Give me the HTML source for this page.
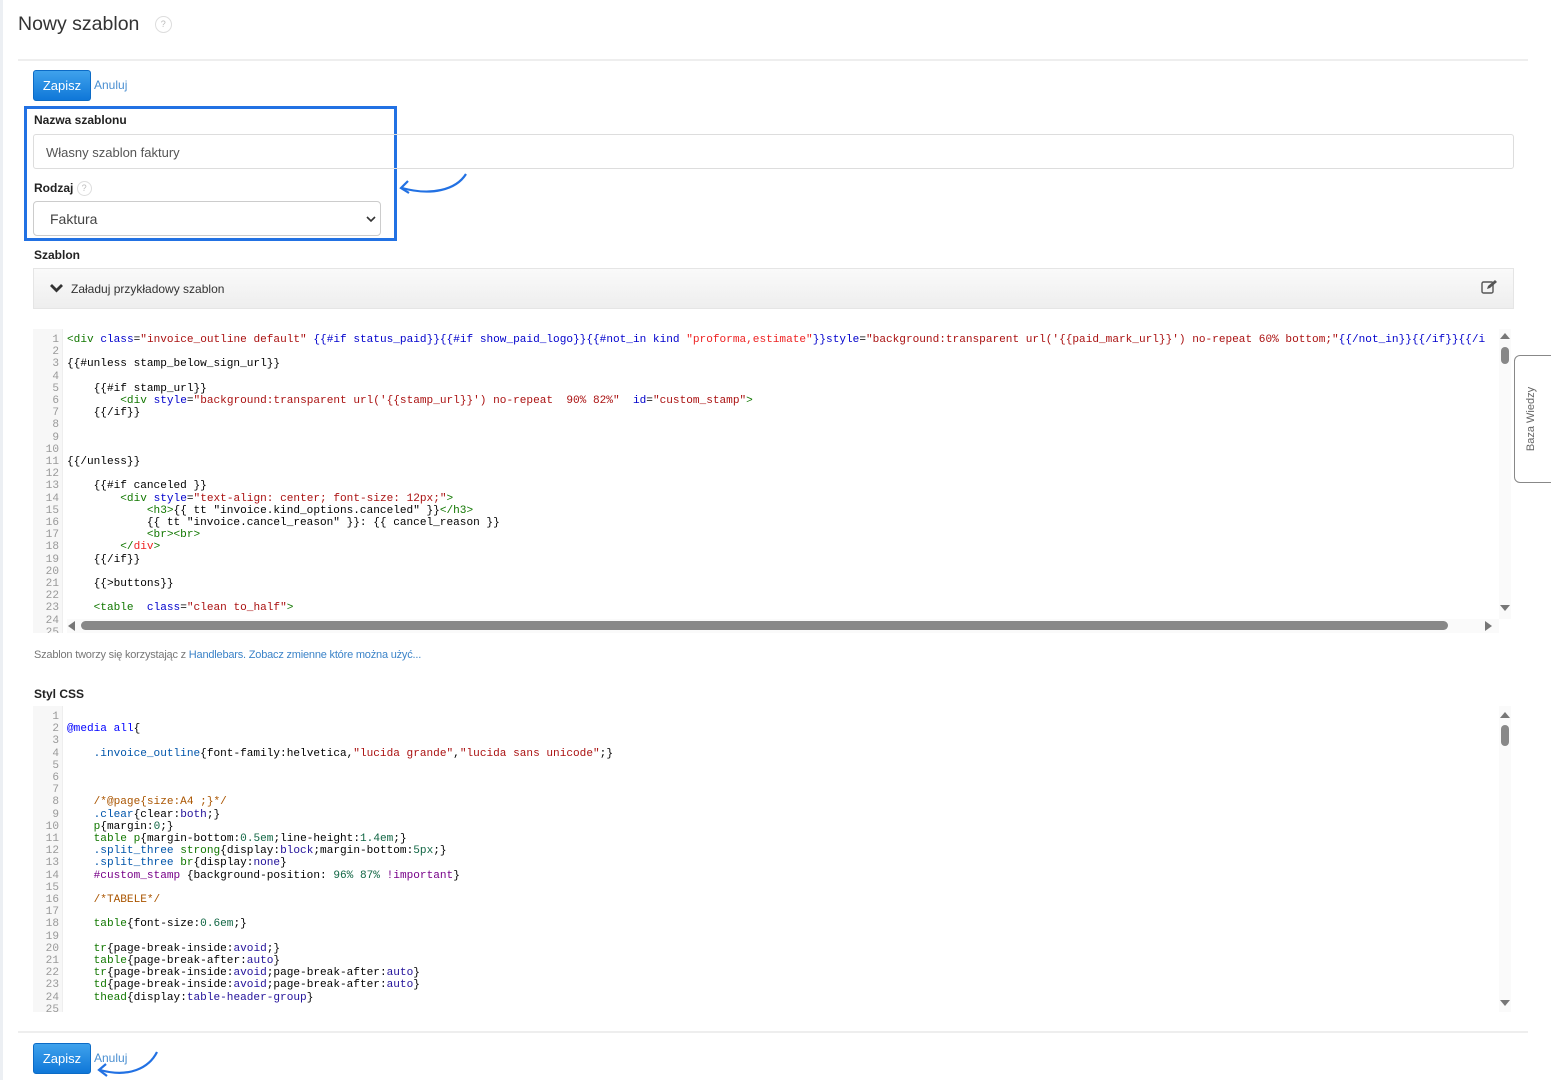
<!DOCTYPE html>
<html><head><meta charset="utf-8">
<style>
*{box-sizing:border-box;margin:0;padding:0}
body{width:1551px;height:1080px;background:#fff;font-family:"Liberation Sans",sans-serif;position:relative;overflow:hidden;color:#333}
.abs{position:absolute}
.btn{position:absolute;left:33px;width:58px;height:31px;border-radius:3px;background:linear-gradient(#3fa2ec,#0f77d8);border:1px solid #0c6bc6;color:#fff;font-size:13px;text-align:center;line-height:29px}
.link{position:absolute;left:94px;font-size:12px;color:#4a8fd1}
.lbl{position:absolute;left:34px;font-size:12px;font-weight:bold;color:#222}
.q{display:inline-block;width:15px;height:15px;border:1px solid #ddd;border-radius:50%;font-size:9px;color:#bbb;text-align:center;line-height:13px;font-weight:normal;vertical-align:middle}
.code{position:absolute;left:33px;width:1480px;font-family:"Liberation Mono",monospace;font-size:11.1px;line-height:12.2px;overflow:hidden;background:#fff}
.gut{position:absolute;left:0;top:0;bottom:0;width:30px;background:#f7f7f7;border-right:1px solid #eee;color:#999;text-align:right;padding-right:3px;white-space:pre}
.txt{position:absolute;left:34px;top:0;white-space:pre;color:#000}
.t{color:#170}.a{color:#00c}.s{color:#a11}.h{color:#00c}.c{color:#a50}.n{color:#164}.k{color:#708}.v{color:#05a}.at{color:#219}.d{color:#00f}
.vs{position:absolute;width:12px;background:#fafafa}
</style></head><body>
<div class="abs" style="left:0;top:0;width:3px;height:1080px;background:#eceff3"></div>
<div class="abs" style="left:18px;top:13px;font-size:19.5px;color:#333">Nowy szablon <span class="q" style="margin-left:10px;width:17px;height:17px;line-height:15px">?</span></div>
<div class="abs" style="left:18px;top:59px;width:1510px;height:2px;background:#eee"></div>

<div class="btn" style="top:70px">Zapisz</div>
<div class="link" style="top:78px">Anuluj</div>

<div class="abs" style="left:24px;top:106px;width:373px;height:135px;border:3px solid #2271e3"></div>
<div class="lbl" style="top:113px">Nazwa szablonu</div>
<div class="abs" style="left:33px;top:134px;width:1481px;height:35px;border:1px solid #ddd;border-radius:3px;font-size:13px;color:#555;padding:10px 12px">Własny szablon faktury</div>
<div class="lbl" style="top:181px">Rodzaj <span class="q">?</span></div>
<div class="abs" style="left:33px;top:201px;width:348px;height:35px;border:1px solid #ccc;border-radius:4px;font-size:14px;color:#444;padding:9px 16px">Faktura
<svg class="abs" style="right:4px;top:13px" width="10" height="8" viewBox="0 0 10 8"><path d="M1 2l4 4 4-4" stroke="#333" stroke-width="1.6" fill="none"/></svg></div>
<svg class="abs" style="left:396px;top:170px" width="75" height="30" viewBox="0 0 75 30"><path d="M70 4C60 20 35 26 6 18" stroke="#2271e3" stroke-width="2.2" fill="none"/><path d="M12 11L5 18l8 5" stroke="#2271e3" stroke-width="2.2" fill="none"/></svg>

<div class="lbl" style="top:248px">Szablon</div>
<div class="abs" style="left:33px;top:268px;width:1481px;height:41px;border:1px solid #e5e5e5;background:linear-gradient(#fafafa,#eeeeee);font-size:12px;color:#333;padding:13px 0 0 37px">Załaduj przykładowy szablon</div>
<svg class="abs" style="left:49px;top:283px" width="15" height="10" viewBox="0 0 15 10"><path d="M2 2l5.5 5.5L13 2" stroke="#333" stroke-width="2.8" fill="none"/></svg>
<svg class="abs" style="left:1481px;top:279px" width="17" height="15" viewBox="0 0 17 15"><rect x="1" y="3" width="11" height="11" rx="1.5" stroke="#555" stroke-width="1.4" fill="none"/><path d="M6 10l1-3 7-6 2 2-7 6z" fill="#555"/></svg>

<div class="code" style="top:329px;height:304px">
<div class="gut" style="padding-top:5px">1
2
3
4
5
6
7
8
9
10
11
12
13
14
15
16
17
18
19
20
21
22
23
24
25</div>
<div class="txt" style="top:5px"><span class="t">&lt;div</span> <span class="a">class</span>=<span class="s">"invoice_outline default"</span> <span class="h">{{#if status_paid}}{{#if show_paid_logo}}{{#not_in kind</span> <span class="s" style="color:#e22">"proforma,estimate"</span><span class="h">}}style</span>=<span class="s">"background:transparent url('{{paid_mark_url}}') no-repeat 60% bottom;"</span><span class="h">{{/not_in}}{{/if}}{{/i</span>

{{#unless stamp_below_sign_url}}

    {{#if stamp_url}}
        <span class="t">&lt;div</span> <span class="a">style</span>=<span class="s">"background:transparent url('{{stamp_url}}') no-repeat  90% 82%"</span>  <span class="a">id</span>=<span class="s">"custom_stamp"</span><span class="t">&gt;</span>
    {{/if}}



{{/unless}}

    {{#if canceled }}
        <span class="t">&lt;div</span> <span class="a">style</span>=<span class="s">"text-align: center; font-size: 12px;"</span><span class="t">&gt;</span>
            <span class="t">&lt;h3&gt;</span>{{ tt "invoice.kind_options.canceled" }}<span class="t">&lt;/h3&gt;</span>
            {{ tt "invoice.cancel_reason" }}: {{ cancel_reason }}
            <span class="t">&lt;br&gt;&lt;br&gt;</span>
        <span class="t">&lt;/</span><span style="color:#e22">div</span><span class="t">&gt;</span>
    {{/if}}

    {{&gt;buttons}}

    <span class="t">&lt;table</span>  <span class="a">class</span>=<span class="s">"clean to_half"</span><span class="t">&gt;</span></div>
<div class="vs" style="left:1466px;top:0;height:290px"></div>
<svg class="abs" style="left:1467px;top:3px" width="10" height="8"><path d="M0 7L5 1 10 7z" fill="#777"/></svg>
<div class="abs" style="left:1468px;top:18px;width:8px;height:17px;border-radius:4px;background:#888"></div>
<svg class="abs" style="left:1467px;top:275px" width="10" height="8"><path d="M0 1L5 7 10 1z" fill="#777"/></svg>
<div class="abs" style="left:34px;top:290px;width:1432px;height:14px;background:#fafafa"></div>
<svg class="abs" style="left:35px;top:292px" width="8" height="10"><path d="M7 0L0 5 7 10z" fill="#777"/></svg>
<div class="abs" style="left:48px;top:292px;width:1367px;height:9px;border-radius:5px;background:#888"></div>
<svg class="abs" style="left:1452px;top:292px" width="8" height="10"><path d="M0 0L7 5 0 10z" fill="#777"/></svg>
</div>

<div class="abs" style="left:1514px;top:355px;width:40px;height:128px;border:1px solid #888;border-radius:6px 0 0 6px;background:#fff"></div>
<div class="abs" style="left:1531px;top:419px;transform:translate(-50%,-50%) rotate(-90deg);font-size:11px;color:#666;white-space:nowrap">Baza Wiedzy</div>

<div class="abs" style="left:34px;top:649px;font-size:11px;color:#777;letter-spacing:-0.2px">Szablon tworzy się korzystając z <span style="color:#3b83c8">Handlebars. Zobacz zmienne które można użyć...</span></div>

<div class="lbl" style="top:687px">Styl CSS</div>
<div class="code" style="top:706px;height:306px">
<div class="gut" style="padding-top:5px">1
2
3
4
5
6
7
8
9
10
11
12
13
14
15
16
17
18
19
20
21
22
23
24
25</div>
<div class="txt" style="top:5px">
<span class="d">@media</span> <span class="d">all</span>{

    <span class="v">.invoice_outline</span>{font-family:helvetica,<span class="s">"lucida grande"</span>,<span class="s">"lucida sans unicode"</span>;}



    <span class="c">/*@page{size:A4 ;}*/</span>
    <span class="v">.clear</span>{clear:<span class="at">both</span>;}
    <span class="t">p</span>{margin:<span class="n">0</span>;}
    <span class="t">table</span> <span class="t">p</span>{margin-bottom:<span class="n">0.5em</span>;line-height:<span class="n">1.4em</span>;}
    <span class="v">.split_three</span> <span class="t">strong</span>{display:<span class="at">block</span>;margin-bottom:<span class="n">5px</span>;}
    <span class="v">.split_three</span> <span class="t">br</span>{display:<span class="at">none</span>}
    <span class="d" style="color:#708">#custom_stamp</span> {background-position: <span class="n">96%</span> <span class="n">87%</span> <span class="k">!important</span>}

    <span class="c">/*TABELE*/</span>

    <span class="t">table</span>{font-size:<span class="n">0.6em</span>;}

    <span class="t">tr</span>{page-break-inside:<span class="at">avoid</span>;}
    <span class="t">table</span>{page-break-after:<span class="at">auto</span>}
    <span class="t">tr</span>{page-break-inside:<span class="at">avoid</span>;page-break-after:<span class="at">auto</span>}
    <span class="t">td</span>{page-break-inside:<span class="at">avoid</span>;page-break-after:<span class="at">auto</span>}
    <span class="t">thead</span>{display:<span class="at">table-header-group</span>}</div>
<div class="vs" style="left:1466px;top:0;height:306px"></div>
<svg class="abs" style="left:1467px;top:5px" width="10" height="8"><path d="M0 7L5 1 10 7z" fill="#777"/></svg>
<div class="abs" style="left:1468px;top:19px;width:8px;height:21px;border-radius:4px;background:#888"></div>
<svg class="abs" style="left:1467px;top:293px" width="10" height="8"><path d="M0 1L5 7 10 1z" fill="#777"/></svg>
</div>

<div class="abs" style="left:18px;top:1031px;width:1510px;height:2px;background:#eee"></div>
<div class="btn" style="top:1043px">Zapisz</div>
<div class="link" style="top:1051px">Anuluj</div>
<svg class="abs" style="left:94px;top:1050px" width="68" height="30" viewBox="0 0 68 30"><path d="M63 2C55 18 35 28 6 20" stroke="#2271e3" stroke-width="2.2" fill="none"/><path d="M12 14L5 20l8 6" stroke="#2271e3" stroke-width="2.2" fill="none"/></svg>
</body></html>
